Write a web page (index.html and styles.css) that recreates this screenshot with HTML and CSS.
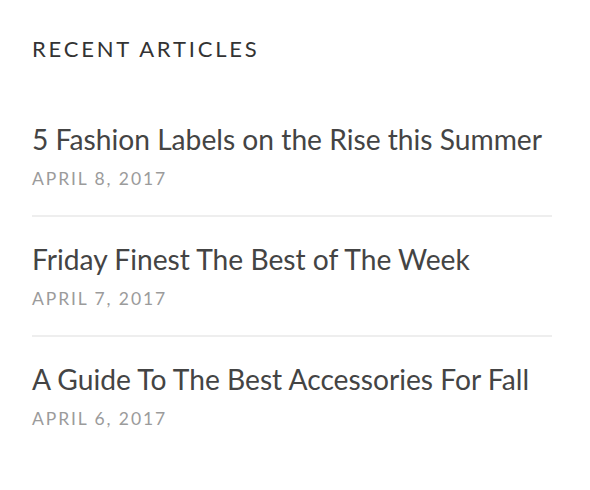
FILE: index.html
```html
<!DOCTYPE html>
<html>
<head>
<meta charset="utf-8">
<link rel="stylesheet" href="styles.css">
</head>
<body>
<section class="widget">
  <h2 class="widget-title">Recent Articles</h2>
  <ul class="post-list">
    <li class="post">
      <a class="post-title" href="#">5 Fashion Labels on the Rise this Summer</a>
      <span class="post-date">April 8, 2017</span>
    </li>
    <li class="post">
      <a class="post-title" href="#">Friday Finest The Best of The Week</a>
      <span class="post-date">April 7, 2017</span>
    </li>
    <li class="post">
      <a class="post-title" href="#">A Guide To The Best Accessories For Fall</a>
      <span class="post-date">April 6, 2017</span>
    </li>
  </ul>
</section>
</body>
</html>
```
FILE: styles.css
```css
html, body {
  margin: 0;
  padding: 0;
  background: #fff;
}
body {
  font-family: "Lato", "Open Sans", sans-serif;
  color: #444;
}
.widget {
  width: 520px;
  padding: 32px 0 0 32px;
}
.widget-title {
  margin: 0 0 55px;
  font-size: 22px;
  font-weight: 400;
  line-height: 34px;
  letter-spacing: 2.8px;
  text-transform: uppercase;
  color: #333;
}
.post-list {
  list-style: none;
  margin: 0;
  padding: 0;
}
.post {
  display: flex;
  flex-direction: column;
  padding: 0 0 24px;
  margin-bottom: 24px;
  border-bottom: 2px solid #eee;
}
.post:last-child {
  border-bottom: none;
}
.post-title {
  font-size: 28.2px;
  line-height: 36px;
  color: #444;
  text-decoration: none;
}
.post-date {
  margin-top: 10px;
  font-size: 17.5px;
  line-height: 24px;
  letter-spacing: 1.9px;
  text-transform: uppercase;
  color: #9b9b9b;
}
```
